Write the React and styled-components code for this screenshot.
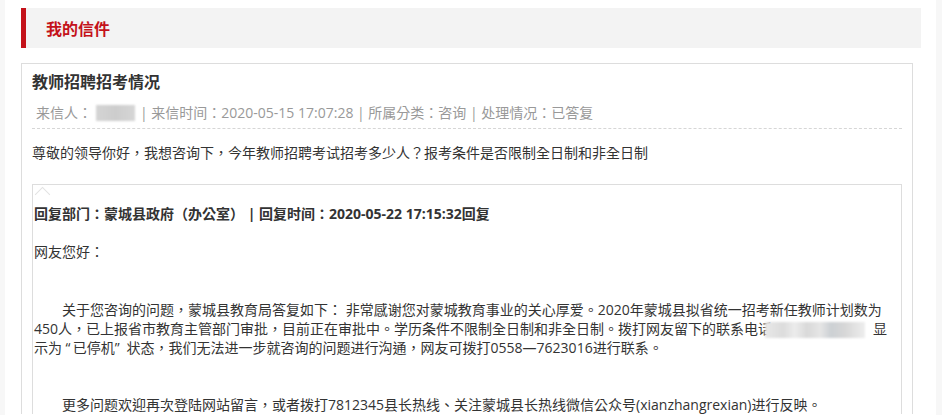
import React from 'react';
import styled, { createGlobalStyle } from 'styled-components';

const GlobalStyle = createGlobalStyle`
  html, body {
    margin: 0;
    padding: 0;
    background: #f7f7f7;
  }
  body {
    font-family: "Open Sans", "Noto Sans CJK TC", "Noto Sans CJK SC", sans-serif;
    font-size: 14px;
    color: #333;
  }
  p { margin: 0; }
`;

const Page = styled.div`
  margin-left: 5px;
  width: 931px;
  min-height: 415px;
  box-sizing: border-box;
  background: #fff;
  padding: 8px 15px 0 16px;
  overflow: hidden;
`;

const SectionHead = styled.div`
  height: 40px;
  background: #f3f3f3;
  border-left: 5px solid #c4121a;
  padding-left: 20px;
  display: flex;
  align-items: center;
  h2 {
    margin: 0;
    font-size: 16px;
    font-weight: 700;
    color: #c4121a;
  }
`;

const LetterCard = styled.div`
  margin-top: 15px;
  width: calc(100% - 8px);
  box-sizing: border-box;
  border: 1px solid #ddd;
  border-bottom: none;
  padding: 6px 10px 0 10px;
  h3 {
    margin: 0;
    font-size: 16px;
    font-weight: 700;
    line-height: 24px;
    color: #333;
  }
`;

const Meta = styled.div`
  margin-top: 7px;
  padding: 0 0 3px 4px;
  line-height: 24px;
  color: #999;
  border-bottom: 1px dashed #d6d6d6;
  display: flex;
  align-items: center;
  white-space: pre;
`;

const Masked = styled.span`
  display: inline-block;
  width: ${p => p.$w}px;
  height: 16px;
  margin: 0 ${p => p.$mr || 0}px 0 ${p => p.$ml || 0}px;
  vertical-align: middle;
  background: ${p => p.$bg};
  filter: blur(0.8px);
`;

const Question = styled.p`
  margin-top: 12px !important;
  line-height: 24px;
  color: #333;
`;

const ReplyBox = styled.div`
  position: relative;
  margin-top: 19px;
  border: 1px solid #ddd;
  border-bottom: none;
  padding: 0 4px 0 1px;
  line-height: 19px;
  color: #333;
`;

const Notch = styled.span`
  position: absolute;
  top: 4px;
  left: 4px;
  width: 10px;
  height: 10px;
  border-top: 1px solid #e2e2e2;
  border-left: 1px solid #e2e2e2;
  transform: rotate(45deg);
`;

const ReplyHead = styled.p`
  padding-top: 19px;
  font-weight: 700;
`;

const Line = styled.p`
  margin-top: ${p => p.$gap}px !important;
  text-indent: ${p => (p.$indent ? '28px' : '0')};
`;

export default function App() {
  return (
    <>
      <GlobalStyle />
      <Page>
        <SectionHead>
          <h2>我的信件</h2>
        </SectionHead>
        <LetterCard>
          <h3>教师招聘招考情况</h3>
          <Meta>
            来信人：
            <Masked $w={39} $ml={4} $mr={5} $bg="linear-gradient(90deg,#d4d4d4,#cdcdcd 50%,#d6d6d6)" />
            | 来信时间：2020-05-15 17:07:28 | 所属分类：咨询 | 处理情况：已答复
          </Meta>
          <Question>尊敬的领导你好，我想咨询下，今年教师招聘考试招考多少人？报考条件是否限制全日制和非全日制</Question>
          <ReplyBox>
            <Notch />
            <ReplyHead>回复部门：蒙城县政府（办公室） | 回复时间：2020-05-22 17:15:32回复</ReplyHead>
            <Line $gap={19}>网友您好：</Line>
            <Line $gap={39} $indent>
              关于您咨询的问题，蒙城县教育局答复如下： 非常感谢您对蒙城教育事业的关心厚爱。2020年蒙城县拟省统一招考新任教师计划数为450人，已上报省市教育主管部门审批，目前正在审批中。学历条件不限制全日制和非全日制。拨打网友留下的联系电话
              <Masked
                $w={100}
                $ml={-7}
                $mr={8}
                $bg="linear-gradient(90deg,#e8e8e8 0,#dcdcdc 18%,#ececec 30%,#d9d9d9 42%,#e6e6e6 55%,#ccd0d4 66%,#d7d7d7 80%,#eeeeee 100%)"
              />
              {'显示为\u2005“\u2009已停机”\u2005\u2005状态，我们无法进一步就咨询的问题进行沟通，网友可拨打0558—7623016进行联系。'}
            </Line>
            <Line $gap={38} $indent>
              更多问题欢迎再次登陆网站留言，或者拨打7812345县长热线、关注蒙城县长热线微信公众号(xianzhangrexian)进行反映。
            </Line>
          </ReplyBox>
        </LetterCard>
      </Page>
    </>
  );
}
